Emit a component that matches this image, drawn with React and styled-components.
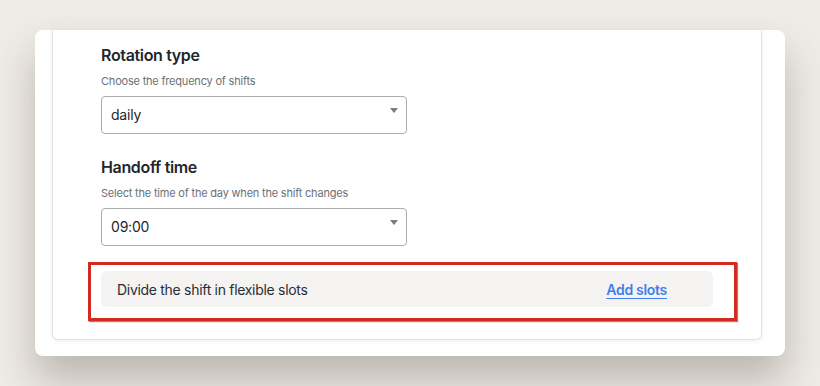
import styled, { createGlobalStyle } from "styled-components";

const GlobalStyle = createGlobalStyle`
  html, body {
    margin: 0;
    padding: 0;
    background: #efebe6;
    font-family: "Inter", "Liberation Sans", sans-serif;
  }
`;

const Page = styled.div`
  height: 386px;
  box-sizing: border-box;
  padding: 30px 35px 0 35px;
  overflow: hidden;
`;

const OuterCard = styled.div`
  height: 326px;
  box-sizing: border-box;
  background: #fff;
  border-radius: 8px;
  padding: 0 23px 16px 17px;
  box-shadow: 0 24px 40px 0 rgba(70, 60, 50, 0.3);
  display: flex;
`;

const InnerCard = styled.div`
  flex: 1;
  box-sizing: border-box;
  border: 1px solid #dfe2e8;
  border-top: none;
  border-radius: 0 0 6px 6px;
  box-shadow: 0 1px 4px rgba(40, 50, 70, 0.08);
  padding: 15px 48px 0 48px;
`;

const Field = styled.div`
  margin-bottom: ${(p) => p.gap || 0}px;
`;

const Title = styled.div`
  font-size: 16px;
  line-height: 20px;
  font-weight: 600;
  letter-spacing: -0.35px;
  color: #23262c;
  margin-bottom: 9px;
`;

const Hint = styled.div`
  font-size: 11px;
  line-height: 14px;
  letter-spacing: -0.2px;
  color: #6c7078;
  margin-bottom: 8px;
`;

const Select = styled.div`
  width: 306px;
  height: 38px;
  box-sizing: border-box;
  border: 1px solid #a9abaf;
  border-radius: 4px;
  display: flex;
  align-items: center;
  justify-content: space-between;
  padding: 0 8px 2px 9px;
  font-size: 14px;
  letter-spacing: -0.2px;
  color: #23262c;
`;

const Caret = styled.span`
  width: 0;
  height: 0;
  border-left: 4px solid transparent;
  border-right: 4px solid transparent;
  border-top: 5px solid #7a7c80;
  margin-bottom: 8px;
`;

const SlotWrap = styled.div`
  position: relative;
`;

const SlotRow = styled.div`
  height: 36px;
  box-sizing: border-box;
  background: #f4f3f1;
  border-radius: 6px;
  display: flex;
  align-items: center;
  justify-content: space-between;
  padding: 0 46px 0 16px;
  font-size: 14px;
  letter-spacing: -0.3px;
  color: #2a2d33;
`;

const AddLink = styled.a`
  color: #3f7ff0;
  font-weight: 600;
  text-decoration: underline;
  text-underline-offset: 3px;
  text-decoration-thickness: 1px;
  cursor: pointer;
`;

const Highlight = styled.div`
  position: absolute;
  left: -13px;
  right: -24px;
  top: -9px;
  bottom: -14px;
  border: 3px solid #d22a1e;
  box-shadow: 1px 1px 1px rgba(0, 0, 0, 0.45);
  pointer-events: none;
`;

export default function App() {
  return (
    <>
      <GlobalStyle />
      <Page>
        <OuterCard>
          <InnerCard>
            <Field gap={23}>
              <Title>Rotation type</Title>
              <Hint>Choose the frequency of shifts</Hint>
              <Select>
                daily
                <Caret />
              </Select>
            </Field>
            <Field gap={25}>
              <Title>Handoff time</Title>
              <Hint>Select the time of the day when the shift changes</Hint>
              <Select>
                09:00
                <Caret />
              </Select>
            </Field>
            <SlotWrap>
              <SlotRow>
                <span>Divide the shift in flexible slots</span>
                <AddLink>Add slots</AddLink>
              </SlotRow>
              <Highlight />
            </SlotWrap>
          </InnerCard>
        </OuterCard>
      </Page>
    </>
  );
}
